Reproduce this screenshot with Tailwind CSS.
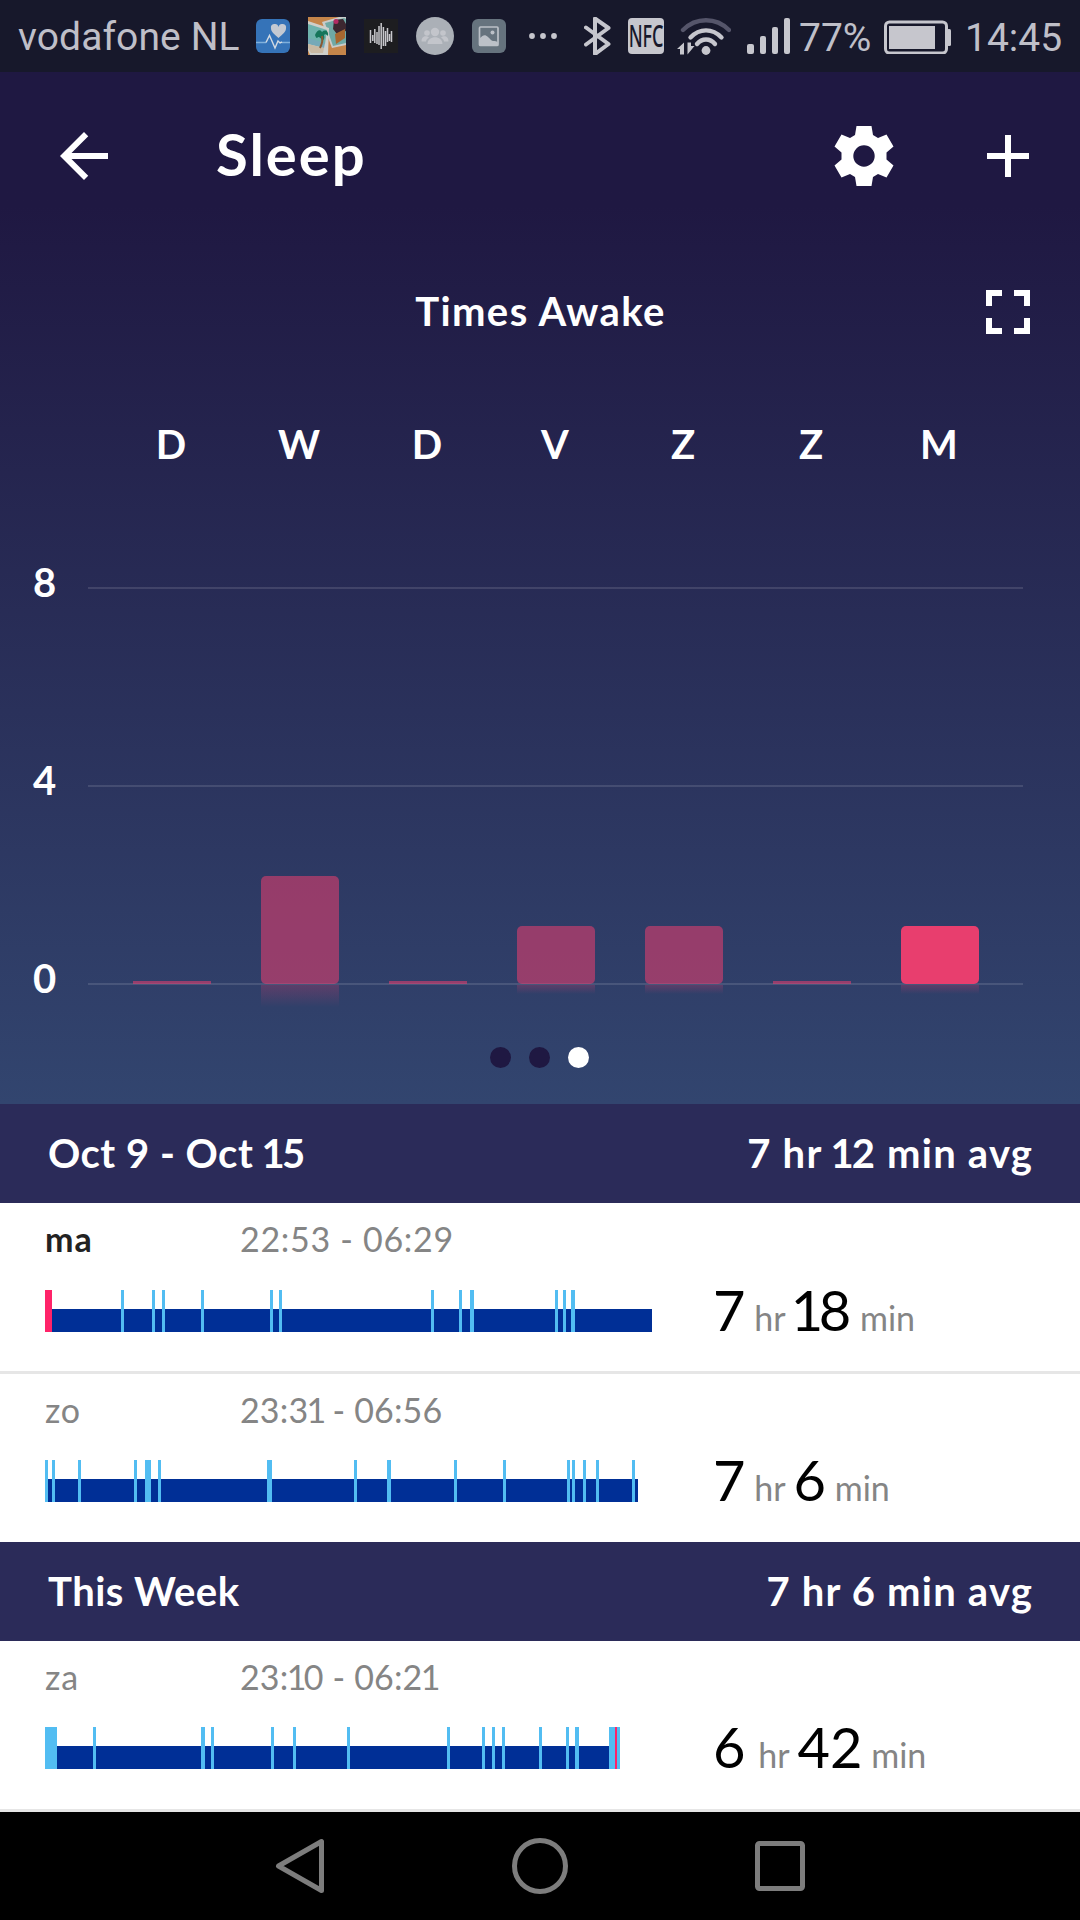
<!DOCTYPE html>
<html lang="nl">
<head>
<meta charset="utf-8">
<meta name="viewport" content="width=device-width, initial-scale=1">
<title>Sleep</title>
<script src="https://cdn.jsdelivr.net/npm/@tailwindcss/browser@4"></script>
</head>
<body class="w-[1080px] h-[1920px] overflow-hidden bg-black font-['Lato',sans-serif]">

  <!-- Status bar -->
  <div class="h-[72px] bg-[#17182b] flex items-center text-[#bfbfc8] font-['Roboto',sans-serif] text-[39px] leading-none whitespace-nowrap">
    <span class="w-[240px] pl-[18px] pt-[2px] tracking-[.1px]">vodafone NL</span>
    <svg class="ml-[16px] w-[34px] h-[36px]" viewBox="0 0 34 36">
      <rect y="1" width="34" height="34" rx="6" fill="#3573b8"/>
      <path d="M22.500 20C18 16 15 13.500 15 10.500a3.700 3.700 0 0 1 7.500-1.500a3.700 3.700 0 0 1 7.500 1.500c0 3-3 5.500-7.500 9.500z" fill="#c3c9d2"/>
      <path d="M0 24.500h10M26 24.500h8" stroke="#7fb0dc" stroke-width="1.500"/>
      <path d="M10 24.500l3.500-7 5.500 12.500 3-7 2 2 2-1" fill="none" stroke="#d3dae2" stroke-width="1.400"/>
    </svg>
    <svg class="ml-[18px] w-[38px] h-[38px]" viewBox="0 0 38 38">
      <rect width="38" height="38" fill="#c5854a"/>
      <path d="M14 5l17-5h7v28l-14 3z" fill="#c9cbca"/>
      <path d="M17 6l19-5 2 1v24l-13 3z" fill="#6fa9a5"/>
      <path d="M26 3l9-1 3 5v7l-9 3-4-5z" fill="#3d2730"/>
      <circle cx="28" cy="4.500" r="2.500" fill="#b32b63"/>
      <path d="M27 17l10-5v9l-9 6z" fill="#a8672f"/>
      <path d="M0 4l21 7-1 27H2l-2-5z" fill="#cfcfca"/>
      <path d="M0 7l19 6-2 14-17-5z" fill="#6fb3ad"/>
      <path d="M0 21l17 5-1 5-16-4z" fill="#76a9b8"/>
      <path d="M0 27l16 4-1 5H3l-3-5z" fill="#c9b9a3"/>
      <path d="M7 18c2-5 5-6 7-3 3-3 7-1 6 4-2-2-3-2-4-1 1 3 0 5-2 6-1-3-2-4-4-4-1 2-2 1-3-2z" fill="#16755a"/>
      <path d="M14 19c1 4 0 8-2 12" fill="none" stroke="#8a5a33" stroke-width="2"/>
    </svg>
    <svg class="ml-[18px] w-[34px] h-[36px]" viewBox="0 0 34 36">
      <rect y="1" width="34" height="34" fill="#1d1d20"/>
      <path d="M6.500 12v13M8.800 17v6M10.800 11v14M13 14v12M15 8v19M17.200 5v26M19.400 9v19M21.500 13v15M23.500 10v14M25.500 16v7M27.500 13v11" stroke="#c8c8cc" stroke-width="1.500"/>
    </svg>
    <svg class="ml-[18px] w-[38px] h-[38px]" viewBox="0 0 38 38">
      <circle cx="19" cy="19" r="19" fill="#abb0b7"/>
      <g fill="#c3c5cb">
        <circle cx="19" cy="15" r="4.200"/><circle cx="11" cy="16" r="2.800"/><circle cx="27" cy="16" r="2.800"/>
        <path d="M11.500 27c0-9 15-9 15 0zM5.500 24.500c0-6 5-6 7.500-4-2 1-3 3-3 4zM32.500 24.500c0-6-5-6-7.500-4 2 1 3 3 3 4z"/>
      </g>
    </svg>
    <svg class="ml-[18px] w-[34px] h-[36px]" viewBox="0 0 34 36">
      <rect y="1" width="34" height="34" rx="6" fill="#66737e"/>
      <rect x="7.500" y="9" width="18.500" height="18.500" rx="1" fill="none" stroke="#bcc1c8" stroke-width="1.700"/>
      <path d="M8 20c3-3 5-4 8-1 2 1.500 3 4 5 4s4 0 5 2v3H8z" fill="#bcc1c8"/>
      <circle cx="20.500" cy="14.500" r="2" fill="#bcc1c8"/>
    </svg>
    <svg class="ml-[23px] w-[28px] h-[8px] fill-[#c6c6cd]" viewBox="0 0 28 8">
      <circle cx="3" cy="4" r="2.900"/><circle cx="14" cy="4" r="2.900"/><circle cx="25" cy="4" r="2.900"/>
    </svg>
    <svg class="ml-[27px] w-[27px] h-[38px]" viewBox="0 0 27 38">
      <path d="M2 10.500l22.500 16.500-13.500 10V1.500l13.500 9.500L2 27.500" fill="none" stroke="#c6c6cd" stroke-width="4" stroke-linejoin="round" stroke-linecap="round"/>
    </svg>
    <div class="ml-[17px] w-[36px] h-[36px] rounded-[4px] bg-[#c6c6cd] text-[#17182b] flex items-center justify-center">
      <span class="text-[30px] font-['Noto_Sans',sans-serif] font-medium inline-block scale-x-[.6]">NFC</span>
    </div>
    <svg class="ml-[13px] w-[54px] h-[38px]" viewBox="0 0 54 38" fill="none" stroke-width="4.400" stroke-linecap="round">
      <path d="M6 13c13-13 33-13 46 0" stroke="#55556a"/>
      <path d="M13.500 20.500c9-9.500 22-9.500 31 0" stroke="#c6c6cd"/>
      <path d="M20 27c5-6 13-6 18 0" stroke="#c6c6cd"/>
      <circle cx="29" cy="33.500" r="4.400" fill="#c6c6cd"/>
      <path d="M0 32l7-6.500v12H3V32zM17.500 29l-7 8.500v-12h3.500V29z" fill="#c6c6cd"/>
    </svg>
    <svg class="ml-[16px] w-[44px] h-[38px] fill-[#c6c6cd]" viewBox="0 0 44 38">
      <rect x="0" y="27" width="7" height="10" rx="2"/><rect x="13" y="19" width="6" height="18" rx="2"/>
      <rect x="25" y="10" width="6" height="27" rx="2"/><rect x="37" y="1" width="6" height="36" rx="2"/>
    </svg>
    <span class="ml-[8px] w-[72px] pt-[4px]">77%</span>
    <svg class="ml-[13px] w-[68px] h-[36px]" viewBox="0 0 68 36">
      <rect x="1.500" y="4" width="61" height="31" rx="4" fill="none" stroke="#c6c6cd" stroke-width="3"/>
      <rect x="5" y="8" width="46" height="23" fill="#c6c6cd"/>
      <rect x="63" y="11" width="4" height="17" rx="1.500" fill="#c6c6cd"/>
    </svg>
    <span class="ml-[13px] pt-[4px]">14:45</span>
  </div>

  <!-- Chart section -->
  <section class="h-[1032px] bg-linear-to-b from-[#1f1842] from-[13%] to-[#32456f] text-white">
    <header class="h-[168px] flex items-center pl-[48px] pr-[36px]">
      <svg class="w-[72px] h-[72px] fill-white" viewBox="0 0 24 24"><path d="M20 11H7.830l5.590-5.590L12 4l-8 8 8 8 1.410-1.410L7.830 13H20z"/></svg>
      <h1 class="ml-[96px] mb-[4px] text-[58px] leading-none font-bold tracking-[2px]">Sleep</h1>
      <svg class="ml-auto w-[72px] h-[72px] fill-white" viewBox="-36 -36 72 72">
        <path fill-rule="evenodd" d="M-7.500-30h15L9-21 14-18 22.500-21.500 29.500-9.500 22.500-3.500V3.500L29.500 9.500 22.500 21.500 14 18 9 21 7.500 30h-15L-9 21-14 18-22.500 21.500-29.500 9.500-22.500 3.500V-3.500L-29.500-9.500-22.500-21.500-14-18-9-21zM0-10.700a10.700 10.700 0 1 0 0 21.400a10.700 10.700 0 1 0 0-21.400z"/>
      </svg>
      <svg class="ml-[72px] w-[72px] h-[72px] fill-white" viewBox="0 0 24 24"><path d="M19 13h-6v6h-2v-6H5v-2h6V5h2v6h6z"/></svg>
    </header>

    <div class="h-[144px] grid grid-cols-[1fr_auto_1fr] items-center pr-[36px]">
      <h2 class="col-start-2 ml-[37px] mb-[2px] text-[40px] leading-none font-bold tracking-[1.400px]">Times Awake</h2>
      <svg class="justify-self-end w-[72px] h-[72px]" viewBox="0 0 72 72" fill="none" stroke="#fff" stroke-width="6">
        <path d="M17 30V17h13M42 17h13v13M55 42v13H42M30 55H17V42"/>
      </svg>
    </div>

    <div id="days" class="mt-[36px] h-[48px] ml-[107px] w-[896px] grid grid-cols-7 items-center text-center text-[40px] leading-none font-bold"></div>

    <div class="relative mt-[96px] flex flex-col gap-[150px] text-[40px] leading-none font-bold">
      <div class="h-[48px] flex items-center"><span class="w-[88px] pl-[33px] pb-[12px]">8</span><i class="w-[935px] h-[2px] bg-white/12"></i></div>
      <div class="h-[48px] flex items-center"><span class="w-[88px] pl-[33px] pb-[12px]">4</span><i class="w-[935px] h-[2px] bg-white/12"></i></div>
      <div class="h-[48px] flex items-center"><span class="w-[88px] pl-[33px] pb-[12px]">0</span><i class="w-[935px] h-[2px] bg-white/12"></i></div>
      <div id="bars" class="absolute left-[108px] bottom-[24px] w-[896px] grid grid-cols-7 items-end justify-items-center"></div>
    </div>

    <div class="mt-[39px] pr-[1px] flex justify-center gap-[18px]">
      <i class="size-[21px] rounded-full bg-[#1f1842]"></i>
      <i class="size-[21px] rounded-full bg-[#1f1842]"></i>
      <i class="size-[21px] rounded-full bg-white"></i>
    </div>
  </section>

  <!-- Sleep log -->
  <main id="log" class="h-[708px] bg-white whitespace-nowrap"></main>

  <!-- Navigation bar -->
  <nav class="h-[108px] bg-black flex items-center justify-center gap-[184px]">
    <svg class="w-[56px] h-[56px]" viewBox="0 0 56 56" fill="none" stroke="#7d7d7d" stroke-width="5" stroke-linejoin="round"><path d="M49.500 3.500v49L6.500 28z"/></svg>
    <svg class="w-[56px] h-[56px]" viewBox="0 0 56 56" fill="none" stroke="#7d7d7d" stroke-width="5"><circle cx="28" cy="28" r="25.500"/></svg>
    <svg class="w-[56px] h-[56px]" viewBox="0 0 56 56" fill="none" stroke="#7d7d7d" stroke-width="5"><rect x="5.500" y="5.500" width="45" height="45" rx="2"/></svg>
  </nav>

  <script>
    // bar height and reflection height in px
    const days = [
      { label: 'D', height: 3, reflection: 0 },
      { label: 'W', height: 108, reflection: 22 },
      { label: 'D', height: 3, reflection: 0 },
      { label: 'V', height: 58, reflection: 9 },
      { label: 'Z', height: 58, reflection: 9 },
      { label: 'Z', height: 3, reflection: 0 },
      { label: 'M', height: 58, reflection: 9, active: true },
    ];

    // wakes: [start, width, awake?]
    const weeks = [
      { title: 'Oct 9 - Oct 15', avg: '7 hr 12 min avg', nights: [
        { day: 'ma', time: '22:53 - 06:29', hr: 7, min: 18, today: true, width: 607,
          wakes: [[0,7,1],[76,3],[107,3],[117,3],[156,3],[225,3],[234,3],[386,3],[414,3],[425,4],[510,3],[518,3],[526,4]] },
        { day: 'zo', time: '23:31 - 06:56', hr: 7, min: 6, width: 593,
          wakes: [[0,3],[7,3],[33,3],[89,3],[100,6],[113,3],[222,5],[309,3],[342,4],[409,3],[458,3],[522,3],[527,3],[538,3],[551,3],[587,3]] },
      ]},
      { title: 'This Week', avg: '7 hr 6 min avg', nights: [
        { day: 'za', time: '23:10 - 06:21', hr: 6, min: 42, width: 564,
          wakes: [[0,12],[48,3],[156,4],[166,3],[226,3],[248,3],[302,3],[402,3],[437,3],[447,3],[457,3],[494,3],[521,3],[530,4],[564,11],[570,2,1]] },
      ]},
    ];

    // Lato's figures are tabular, so pull the 1 in a little
    const figures = s => String(s).replace(/1/g, '<span class="-ml-[.05em] -mr-[.08em]">1</span>');

    document.getElementById('days').innerHTML = days.map(d => `<span>${d.label}</span>`).join('');

    document.getElementById('bars').innerHTML = days.map(d => `
      <div class="relative w-[78px] ${d.active ? 'bg-[#e83e6e]' : 'bg-[#e83e6e]/56'} ${d.height > 10 ? 'rounded-[5px]' : ''}" style="height:${d.height}px">
        <div class="absolute top-full mt-[1px] w-full bg-linear-to-b from-[#e83e6e]/24 to-[#e83e6e]/0" style="height:${d.reflection}px"></div>
      </div>`).join('');

    const night = (n, last) => `
      <div class="h-[168px] box-content flex ${last ? '' : 'border-b-[3px] border-[#e6e6e6]'}">
        <div class="w-[713px] pl-[45px] shrink-0">
          <div class="flex ${n.today ? 'h-[87px]' : 'h-[86px]'} pt-[19px] text-[34px] leading-[34px] text-[#858585]">
            <span class="w-[195px] ${n.today ? 'text-[#222] font-bold tracking-[1px]' : 'tracking-[.800px]'}">${n.day}</span>
            <span class="${n.time.includes('1') ? 'tracking-[.150px]' : 'tracking-[.700px]'}">${figures(n.time)}</span>
          </div>
          <svg width="612" height="42" viewBox="0 0 612 42" shape-rendering="crispEdges">
            <rect y="19" width="${n.width}" height="23" fill="#002f96"/>
            ${n.wakes.map(([x, w, awake]) => `<rect x="${x}" width="${w}" height="42" fill="${awake ? '#ff2369' : '#52bdf2'}"/>`).join('')}
          </svg>
        </div>
        <div class="${n.today ? 'pt-[79px]' : 'pt-[78px]'} text-[34px] leading-[56px] text-[#858585]">
          <span class="text-[56px] text-black ${n.hr === 6 ? 'tracking-[4px]' : ''}">${n.hr}</span> hr <span class="text-[56px] text-black">${figures(n.min)}</span> min
        </div>
      </div>`;

    document.getElementById('log').innerHTML = weeks.map((w, i) => `
      <div class="h-[99px] bg-[#2b2b59] text-white flex items-center justify-between pl-[48px] pr-[47px] pb-[1px] text-[40px] leading-none font-bold">
        <span class="tracking-[.500px]">${figures(w.title)}</span><span class="tracking-[1.200px]">${figures(w.avg)}</span>
      </div>
      ${w.nights.map((n, j) => night(n, i === 0 && j === 1)).join('')}`).join('');
  </script>
</body>
</html>
